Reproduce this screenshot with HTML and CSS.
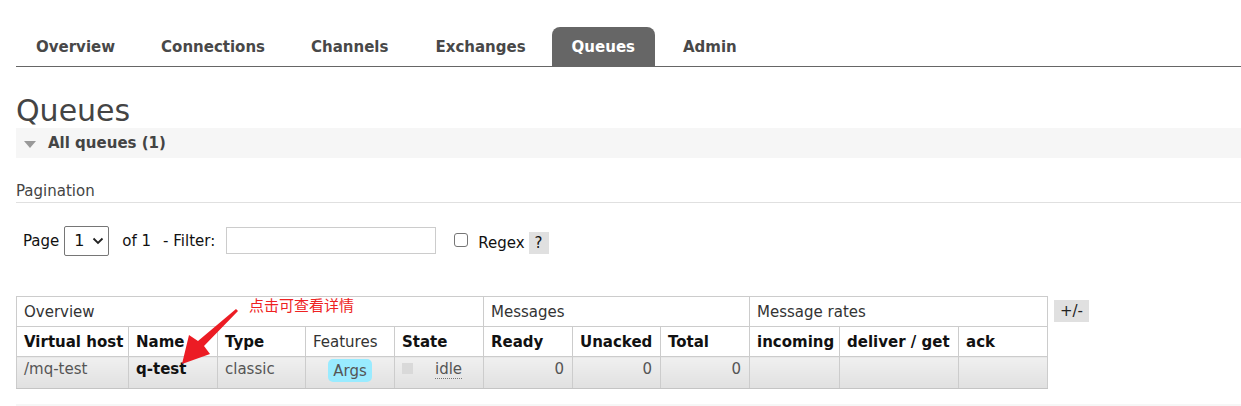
FILE: index.html
```html
<!DOCTYPE html>
<html lang="en">
<head>
<meta charset="utf-8">
<title>Queues</title>
<link rel="stylesheet" href="styles.css">
</head>
<body>
<div class="page">
  <ul class="menu">
    <li>Overview</li>
    <li>Connections</li>
    <li>Channels</li>
    <li>Exchanges</li>
    <li class="active">Queues</li>
    <li>Admin</li>
  </ul>

  <h1 class="title">Queues</h1>

  <div class="section-h"><span class="tri"></span>All queues (1)</div>

  <h3 class="pag-h">Pagination</h3>

  <div class="filter-row">
    <span>Page</span>
    <span class="select">1 <svg width="12" height="8" viewBox="0 0 12 8"><path d="M1.5 1.5 L6 6 L10.5 1.5" fill="none" stroke="#222" stroke-width="1.8"/></svg></span>
    <span class="of">of 1</span>
    <span class="flt">- Filter:</span>
    <span class="input"></span>
    <span class="check"></span>
    <span class="regex">Regex</span>
    <span class="help">?</span>
  </div>

  <div class="table-row">
    <table class="list">
      <colgroup>
        <col class="c-vh">
        <col class="c-name">
        <col class="c-type">
        <col class="c-feat">
        <col class="c-state">
        <col class="c-ready">
        <col class="c-unack">
        <col class="c-total">
        <col class="c-in">
        <col class="c-dg">
        <col class="c-ack">
      </colgroup>
      <tr class="grp">
        <th colspan="5">Overview</th>
        <th colspan="3">Messages</th>
        <th colspan="3">Message rates</th>
      </tr>
      <tr class="hdr">
        <th>Virtual host</th>
        <th>Name</th>
        <th>Type</th>
        <th class="plain">Features</th>
        <th>State</th>
        <th>Ready</th>
        <th>Unacked</th>
        <th>Total</th>
        <th>incoming</th>
        <th>deliver / get</th>
        <th>ack</th>
      </tr>
      <tr class="data">
        <td>/mq-test</td>
        <td class="qname">q-test</td>
        <td>classic</td>
        <td class="center"><span class="badge">Args</span></td>
        <td><span class="sq"></span><span class="idle">idle</span></td>
        <td class="num">0</td>
        <td class="num">0</td>
        <td class="num">0</td>
        <td></td>
        <td></td>
        <td></td>
      </tr>
    </table>
    <span class="plusminus">+/-</span>
  </div>

  <div class="next-section"></div>

  <div class="note">点击可查看详情</div>
  <svg class="arrow" width="1241" height="406" viewBox="0 0 1241 406">
    <polygon points="236,309 238,311 204,346 210,354 182,364 189,335 198,341" fill="#ec1c24"/>
  </svg>
</div>
</body>
</html>
```

FILE: styles.css
```css
html, body {
  margin: 0;
  padding: 0;
  background: #fff;
}
body {
  font-family: "DejaVu Sans", Verdana, sans-serif;
  font-size: 15px;
  color: #444;
  width: 1241px;
  height: 406px;
  overflow: hidden;
}
.page {
  position: relative;
  padding: 27px 0 0 16px;
}
.menu {
  list-style: none;
  margin: 0;
  padding: 0;
  display: flex;
  gap: 6px;
  border-bottom: 1px solid #666;
}
.menu li {
  padding: 1px 20px 0 20px;
  height: 38px;
  line-height: 39px;
  font-weight: bold;
  font-size: 15px;
  color: #484848;
}
.menu li:nth-child(4) {
  padding-left: 21px;
}
.menu li.active {
  background: #666;
  color: #fff;
  border-radius: 8px 8px 0 0;
}
.menu li:last-child {
  padding-left: 22px;
}
.title {
  margin: 27px 0 0 0;
  font-size: 30px;
  font-weight: normal;
  line-height: 34px;
  color: #444;
}
.section-h {
  height: 30px;
  line-height: 30px;
  background: #f6f6f6;
  font-weight: bold;
  color: #444;
  display: flex;
  align-items: center;
}
.tri {
  width: 0;
  height: 0;
  border-left: 6px solid transparent;
  border-right: 6px solid transparent;
  border-top: 7px solid #999;
  margin: 2px 12px 0 8px;
}
.pag-h {
  margin: 24px 0 0 0;
  font-size: 15px;
  font-weight: normal;
  color: #444;
  line-height: 18px;
  padding-bottom: 2px;
  border-bottom: 1px solid #e0e0e0;
}
.filter-row {
  display: flex;
  align-items: center;
  margin-top: 22px;
  padding-left: 7px;
  height: 31px;
  color: #111;
}
.select {
  box-sizing: border-box;
  margin-left: 5px;
  width: 45px;
  height: 30px;
  border: 1px solid #767676;
  border-radius: 2px;
  display: flex;
  align-items: center;
  justify-content: space-between;
  padding: 0 4px 0 9px;
  font-size: 16px;
}
.of {
  margin-left: 13px;
}
.flt {
  margin-left: 12px;
}
.input {
  box-sizing: border-box;
  width: 210px;
  height: 27px;
  border: 1px solid #ccc;
  margin-left: 11px;
}
.check {
  box-sizing: border-box;
  width: 14px;
  height: 14px;
  border: 1px solid #767676;
  border-radius: 3px;
  margin-left: 18px;
  margin-top: -2px;
}
.regex {
  margin-left: 10px;
  margin-top: 4px;
}
.help {
  margin-left: 4px;
  margin-top: 4px;
  width: 20px;
  height: 22px;
  line-height: 22px;
  text-align: center;
  background: #e0e0e0;
}
.table-row {
  margin-top: 40px;
  display: flex;
  align-items: flex-start;
}
.list {
  border-collapse: collapse;
  width: 1031px;
  table-layout: fixed;
}
.c-vh { width: 112px; }
.c-name { width: 89px; }
.c-type { width: 88px; }
.c-feat { width: 89px; }
.c-state { width: 89px; }
.c-ready { width: 89px; }
.c-unack { width: 88px; }
.c-total { width: 89px; }
.c-in { width: 90px; }
.c-dg { width: 119px; }
.c-ack { width: 89px; }
.list th, .list td {
  border: 1px solid #ccc;
  padding: 0 7px;
  text-align: left;
  white-space: nowrap;
  overflow: hidden;
}
.grp th {
  height: 29px;
  font-weight: normal;
  color: #333;
}
.hdr th {
  height: 29px;
  font-weight: bold;
  color: #111;
}
.hdr th.plain {
  font-weight: normal;
  color: #333;
}
.data td {
  box-sizing: border-box;
  height: 32px;
  padding-top: 3px;
  line-height: 18px;
  vertical-align: top;
  background: linear-gradient(#f0f0f0, #e0e0e0);
  color: #555;
  border-bottom-color: #c4c4c4;
}
.data td.qname {
  font-weight: bold;
  color: #111;
}
.data td.center {
  text-align: center;
  padding-top: 2px;
}
.data td.num {
  text-align: right;
  padding-right: 8px;
}
.badge {
  display: inline-block;
  background: #99ebff;
  border-radius: 5px;
  padding: 0 5px;
  height: 23px;
  line-height: 25px;
}
.sq {
  display: inline-block;
  width: 11px;
  height: 11px;
  background: #d9d9d9;
  vertical-align: 0px;
  margin-right: 22px;
}
.idle {
  border-bottom: 1px dotted #777;
}
.plusminus {
  margin: 4px 0 0 6px;
  width: 35px;
  height: 22px;
  line-height: 22px;
  text-align: center;
  background: #e0e0e0;
  color: #222;
}
.next-section {
  margin-top: 15px;
  height: 20px;
  background: #f6f6f6;
}
.note {
  position: absolute;
  left: 249px;
  top: 295px;
  font-family: "Noto Sans CJK SC", sans-serif;
  font-size: 15px;
  line-height: 20px;
  color: #ee2222;
}
.arrow {
  position: absolute;
  left: 0;
  top: 0;
  pointer-events: none;
}
```
